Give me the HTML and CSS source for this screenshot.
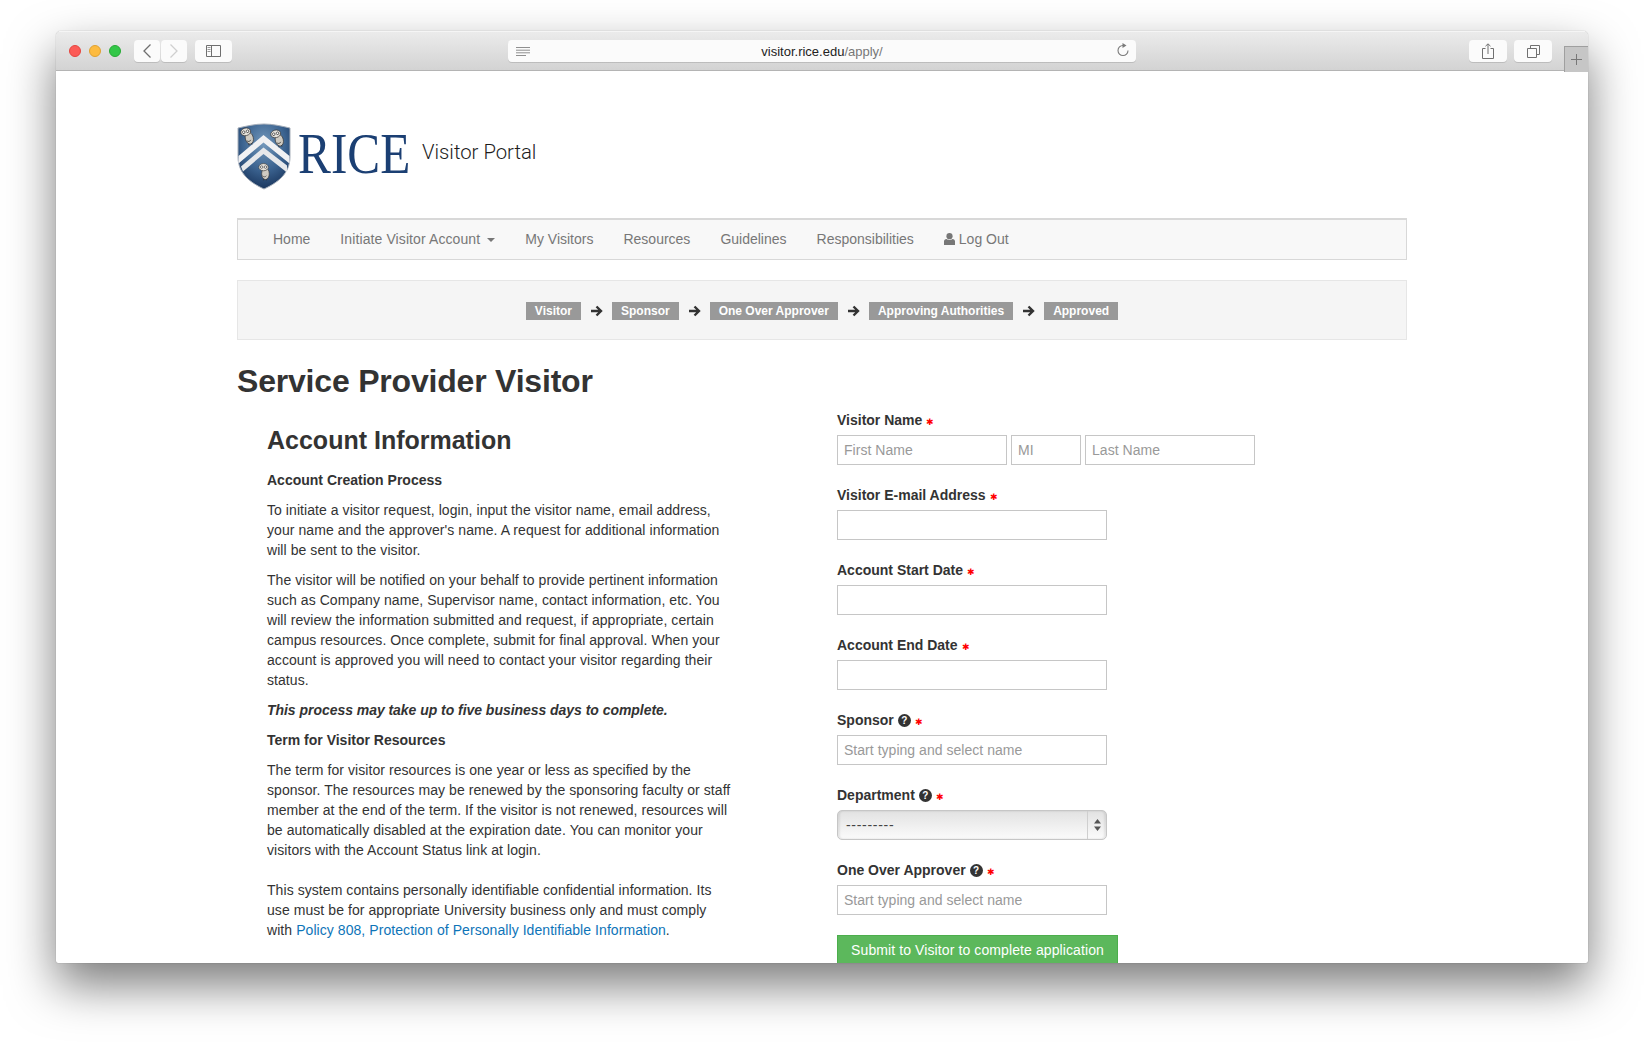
FILE: index.html
```html
<!DOCTYPE html>
<html lang="en">
<head>
<meta charset="utf-8">
<title>Visitor Portal</title>
<link rel="stylesheet" href="styles.css">
</head>
<body>
<div class="window">
  <div class="toolbar">
    <div class="lights">
      <span class="light red"></span><span class="light amber"></span><span class="light green"></span>
    </div>
    <div class="navbtns">
      <span class="tbtn tbtn-nav"><svg width="12" height="16" viewBox="0 0 12 16"><path d="M9.5 1.5 3 8l6.500 6.500" fill="none" stroke="#6f6f6f" stroke-width="1.300"/></svg></span>
      <span class="tbtn tbtn-nav"><svg width="12" height="16" viewBox="0 0 12 16"><path d="M2.500 1.500 9 8l-6.500 6.500" fill="none" stroke="#cfcfcf" stroke-width="1.300"/></svg></span>
    </div>
    <span class="tbtn tbtn-side"><svg width="15" height="12" viewBox="0 0 15 12"><path d="M.5.5h14v11H.500zM5.500.5v11" fill="none" stroke="#6f6f6f"/><path d="M1.500 2.500h3M1.500 4.500h3M1.500 6.500h3" stroke="#9a9a9a"/></svg></span>
    <div class="address">
      <svg class="reader" width="14" height="9" viewBox="0 0 14 9"><path d="M0 .5h14M0 3.200h14M0 5.800h14M0 8.500h10" stroke="#8f8f8f"/></svg>
      <span class="url"><span class="url-host">visitor.rice.edu</span>/apply/</span>
      <svg class="reload" width="13" height="14" viewBox="0 0 13 14"><path d="M7 2.500a5 5 0 1 0 5 5" fill="none" stroke="#7a7a7a" stroke-width="1.100"/><path d="M6.500 0l4 2.500-4 2.500z" fill="#7a7a7a"/></svg>
    </div>
    <span class="tbtn tbtn-share"><svg width="12" height="16" viewBox="0 0 12 16"><path d="M3.500 5.500H.5v10h11v-10h-3M6 11V1M3.500 3.200 6 .8l2.500 2.400" fill="none" stroke="#707070"/></svg></span>
    <span class="tbtn tbtn-tabs"><svg width="13" height="13" viewBox="0 0 13 13"><path d="M.5 3.500h9v9h-9zM3.500 3.500v-3h9v9h-3" fill="none" stroke="#707070"/></svg></span>
    <span class="newtab"><svg width="11" height="11" viewBox="0 0 11 11"><path d="M5.500 0v11M0 5.500h11" stroke="#777"/></svg></span>
  </div>

  <div class="page">
    <header class="brand">
      <div class="logo">
        <svg class="shield" width="54" height="67" viewBox="0 0 54 67">
          <defs>
            <radialGradient id="sh" cx=".5" cy=".3" r=".75">
              <stop offset="0" stop-color="#7398bb"/>
              <stop offset=".55" stop-color="#3b6390"/>
              <stop offset="1" stop-color="#152f56"/>
            </radialGradient>
            <g id="owl">
              <ellipse cx="1" cy="3.500" rx="4" ry="6" fill="#cfcbc2" stroke="#3a3a3a" stroke-width=".7"/>
              <ellipse cx="-1" cy="-3.500" rx="5" ry="3.800" fill="#e4e1da" stroke="#3a3a3a" stroke-width=".7"/>
              <circle cx="-3" cy="-3.600" r="1.300" fill="#fff" stroke="#333" stroke-width=".7"/>
              <circle cx="1" cy="-3.600" r="1.300" fill="#fff" stroke="#333" stroke-width=".7"/>
              <path d="M-1 9v1.500M2 9v1.500M-2 5.500c1 1.500 3 1.500 4 0" stroke="#333" stroke-width=".7" fill="none"/>
            </g>
          </defs>
          <path d="M1 5C10 3 18 1 27 1s17 2 26 4v29c0 17-13 26-26 32C14 60 1 51 1 34z" fill="url(#sh)" stroke="#a7afba"/>
          <path d="M1.500 33 26.500 12 52.500 33v7.500L26.500 19.500 1.500 40.500z" fill="#f0f1f3"/>
          <path d="M4 43.500 26.500 24.500 50 42.500v7L26.500 31 6 48.500z" fill="#e6e8eb"/>
          <use href="#owl" transform="translate(10.500 12) rotate(-14)"/>
          <use href="#owl" transform="translate(40.500 14) rotate(-14)"/>
          <use href="#owl" transform="translate(27.500 47.500) scale(.95)"/>
        </svg>
        <span class="rice">RICE</span>
      </div>
      <span class="portal">Visitor Portal</span>
    </header>

    <nav class="navbar">
      <a class="navlink">Home</a>
      <a class="navlink navlink-wide">Initiate Visitor Account<span class="caret"></span></a>
      <a class="navlink">My Visitors</a>
      <a class="navlink">Resources</a>
      <a class="navlink">Guidelines</a>
      <a class="navlink">Responsibilities</a>
      <a class="navlink"><svg class="usericon" width="11" height="12" viewBox="0 0 11 12"><circle cx="5.500" cy="3.200" r="3.100" fill="#777"/><path d="M0 12V8.500C0 7 1 6 2.500 6c.8.700 1.800 1 3 1s2.200-.3 3-1C10 6 11 7 11 8.500V12z" fill="#777"/></svg>Log Out</a>
    </nav>

    <div class="steps">
      <span class="step">Visitor</span>
      <svg class="arrow" width="13" height="12" viewBox="0 0 13 12"><path d="M1 6h9M6.500 1.500 11 6l-4.500 4.500" fill="none" stroke="#333" stroke-width="2.400"/></svg>
      <span class="step">Sponsor</span>
      <svg class="arrow" width="13" height="12" viewBox="0 0 13 12"><path d="M1 6h9M6.500 1.500 11 6l-4.500 4.500" fill="none" stroke="#333" stroke-width="2.400"/></svg>
      <span class="step">One Over Approver</span>
      <svg class="arrow" width="13" height="12" viewBox="0 0 13 12"><path d="M1 6h9M6.500 1.500 11 6l-4.500 4.500" fill="none" stroke="#333" stroke-width="2.400"/></svg>
      <span class="step">Approving Authorities</span>
      <svg class="arrow" width="13" height="12" viewBox="0 0 13 12"><path d="M1 6h9M6.500 1.500 11 6l-4.500 4.500" fill="none" stroke="#333" stroke-width="2.400"/></svg>
      <span class="step">Approved</span>
    </div>

    <h1 class="title">Service Provider Visitor</h1>

    <div class="columns">
      <section class="info">
        <h2 class="info-title">Account Information</h2>
        <p class="strong">Account Creation Process</p>
        <p>To initiate a visitor request, login, input the visitor name, email address,<br>your name and the approver's name. A request for additional information<br>will be sent to the visitor.</p>
        <p>The visitor will be notified on your behalf to provide pertinent information<br>such as Company name, Supervisor name, contact information, etc. You<br>will review the information submitted and request, if appropriate, certain<br>campus resources. Once complete, submit for final approval. When your<br>account is approved you will need to contact your visitor regarding their<br>status.</p>
        <p class="strong em">This process may take up to five business days to complete.</p>
        <p class="strong">Term for Visitor Resources</p>
        <p class="spaced">The term for visitor resources is one year or less as specified by the<br>sponsor. The resources may be renewed by the sponsoring faculty or staff<br>member at the end of the term. If the visitor is not renewed, resources will<br>be automatically disabled at the expiration date. You can monitor your<br>visitors with the Account Status link at login.</p>
        <p>This system contains personally identifiable confidential information. Its<br>use must be for appropriate University business only and must comply<br>with <a class="link">Policy 808, Protection of Personally Identifiable Information</a>.</p>
      </section>

      <form class="form">
        <div class="group">
          <label class="label">Visitor Name<span class="req">✱</span></label>
          <div class="namerow">
            <input class="input w-name" placeholder="First Name">
            <input class="input w-mi" placeholder="MI">
            <input class="input w-name" placeholder="Last Name">
          </div>
        </div>
        <div class="group">
          <label class="label">Visitor E-mail Address<span class="req">✱</span></label>
          <input class="input w-full">
        </div>
        <div class="group">
          <label class="label">Account Start Date<span class="req">✱</span></label>
          <input class="input w-full">
        </div>
        <div class="group">
          <label class="label">Account End Date<span class="req">✱</span></label>
          <input class="input w-full">
        </div>
        <div class="group">
          <label class="label">Sponsor<span class="help">?</span><span class="req">✱</span></label>
          <input class="input w-full" placeholder="Start typing and select name">
        </div>
        <div class="group">
          <label class="label">Department<span class="help">?</span><span class="req">✱</span></label>
          <div class="select">
            <span class="select-value">---------</span>
            <span class="select-arrows"><svg width="7" height="12" viewBox="0 0 7 12"><path d="M3.500 0 7 4.500H0zM3.500 12 0 7.500h7z" fill="#555"/></svg></span>
          </div>
        </div>
        <div class="group">
          <label class="label">One Over Approver<span class="help">?</span><span class="req">✱</span></label>
          <input class="input w-full" placeholder="Start typing and select name">
        </div>
        <button type="button" class="submit">Submit to Visitor to complete application</button>
      </form>
    </div>
  </div>
</div>
</body>
</html>
```

FILE: styles.css
```css
* { box-sizing: border-box; }
html, body { margin: 0; height: 100%; overflow: hidden; background: #fff; }
body {
  padding: 31px 56px 0;
  font-family: "Liberation Sans", Arial, sans-serif;
  font-size: 14px;
  line-height: 20px;
  color: #333;
}
.window {
  width: 1532px;
  height: 932px;
  background: #fff;
  border-radius: 5px 5px 2px 2px;
  box-shadow: 0 22px 48px rgba(0, 0, 0, .52), 0 0 1px rgba(0, 0, 0, .45);
  overflow: hidden;
  display: flex;
  flex-direction: column;
}

/* Browser chrome */
.toolbar {
  flex: none;
  height: 40px;
  display: flex;
  align-items: flex-start;
  padding-top: 8px;
  background: linear-gradient(#ebebeb, #d3d3d3);
  border-bottom: 1px solid #b4b4b4;
  border-top: 1px solid #f5f5f5;
}
.lights { display: flex; gap: 8px; margin: 5px 0 0 13px; }
.light { width: 12px; height: 12px; border-radius: 50%; }
.red { background: #fc5b57; border: 1px solid #e5453f; }
.amber { background: #fdbb40; border: 1px solid #e0a130; }
.green { background: #33c748; border: 1px solid #27aa35; }
.navbtns { display: flex; gap: 1px; margin-left: 13px; }
.tbtn {
  flex: none;
  display: flex;
  align-items: center;
  justify-content: center;
  height: 22px;
  background: #fbfbfb;
  border-radius: 4px;
  box-shadow: 0 1px 0 rgba(0, 0, 0, .12);
}
.tbtn-nav { width: 26px; }
.tbtn-side { width: 37px; margin-left: 8px; }
.tbtn-share { width: 38px; margin-left: 333px; }
.tbtn-tabs { width: 38px; margin-left: 7px; }
.address {
  flex: none;
  position: relative;
  width: 628px;
  height: 22px;
  margin-left: 276px;
  background: #fbfbfb;
  border-radius: 4px;
  box-shadow: 0 1px 0 rgba(0, 0, 0, .12);
  display: flex;
  align-items: center;
  justify-content: center;
  font-size: 13px;
  color: #777;
}
.url { margin-top: 1px; }
.url-host { color: #222; }
.reader { position: absolute; left: 8px; top: 7px; }
.reload { position: absolute; right: 7px; top: 3px; }
.newtab {
  flex: none;
  width: 24px;
  height: 26px;
  margin: 6px 0 0 12px;
  background: #c6c6c6;
  border: 1px solid #9f9f9f;
  border-width: 1px 0 0 1px;
  display: flex;
  align-items: center;
  justify-content: center;
}

/* Page */
.page { flex: 1; width: 1351px; margin-left: 181px; }
.brand { height: 147px; display: flex; align-items: center; padding-top: 22px; }
.logo { display: flex; align-items: center; width: 185px; }
.shield { flex: none; margin-top: 2px; }
.rice {
  display: inline-block;
  font-family: "Liberation Serif", "Times New Roman", serif;
  font-size: 58px;
  line-height: 66px;
  color: #1b3f73;
  margin: -3px 0 0 7px;
  transform: scaleX(.85);
  transform-origin: left center;
  white-space: nowrap;
}
.portal {
  font-family: Roboto, "Liberation Sans", sans-serif;
  font-weight: 300;
  font-size: 20.300px;
  line-height: 26px;
  color: #1c1c1c;
  margin-top: -7px;
}

.navbar {
  width: 1170px;
  height: 42px;
  display: flex;
  align-items: center;
  padding: 0 0 2px 20px;
  background: #f8f8f8;
  border: 1px solid #d8d8d8;
  border-top-width: 2px;
}
.navlink { padding: 0 15px; color: #777; white-space: nowrap; }
.navlink-wide { letter-spacing: .1px; }
.caret {
  display: inline-block;
  margin-left: 7px;
  border-top: 4px solid #777;
  border-left: 4px solid transparent;
  border-right: 4px solid transparent;
  vertical-align: middle;
}
.usericon { margin-right: 4px; vertical-align: -1px; }

.steps {
  width: 1170px;
  height: 60px;
  margin-top: 20px;
  padding-top: 2px;
  display: flex;
  align-items: center;
  justify-content: center;
  gap: 5px;
  background: #f5f5f5;
  border: 1px solid #e6e6e6;
}
.step {
  height: 18px;
  padding: 0 9px;
  background: #999;
  color: #fff;
  font-size: 12px;
  font-weight: bold;
  line-height: 18px;
}
.arrow { flex: none; margin: 0 4px; }

.title { margin: 23px 0 11px; font-size: 32px; line-height: 36px; font-weight: bold; letter-spacing: -.2px; color: #333; }
.columns { display: flex; }
.info { width: 600px; padding: 16px 0 0 30px; }
.info p { margin: 0 0 10px; letter-spacing: .065px; }
.info-title { margin: 0 0 16px; font-size: 25px; line-height: 28px; font-weight: bold; color: #333; }
.info .strong { font-weight: bold; letter-spacing: 0; }
.info .em { font-style: italic; letter-spacing: -.04px; }
.info .spaced { margin-bottom: 20px; }
.link { color: #0e74b8; }

.form { width: 420px; }
.group { margin-bottom: 20px; }
.label { display: block; height: 20px; margin-bottom: 5px; font-weight: bold; white-space: nowrap; }
.req { margin-left: 4px; color: #f00; font-size: 9px; font-weight: normal; }
.help {
  display: inline-block;
  width: 13px;
  height: 13px;
  margin-left: 4px;
  border-radius: 50%;
  background: #333;
  color: #fff;
  font-size: 10px;
  line-height: 13px;
  text-align: center;
  vertical-align: 0;
  position: relative;
  top: -1px;
}
.namerow { display: flex; gap: 4px; }
.input {
  height: 30px;
  padding: 0 6px;
  border: 1px solid #c6c6c6;
  border-radius: 0;
  background: #fff;
  font: 14px "Liberation Sans", Arial, sans-serif;
  letter-spacing: .03px;
  color: #333;
  display: block;
  outline: none;
}
.input::placeholder { color: #999; opacity: 1; }
.w-name { width: 170px; }
.w-mi { width: 70px; }
.w-full { width: 270px; }
.select {
  width: 270px;
  height: 30px;
  display: flex;
  align-items: center;
  border: 1px solid #c6c6c6;
  border-radius: 5px;
  background: linear-gradient(#e2e2e2, #fbfbfb);
  box-shadow: inset 2px 0 2px rgba(0, 0, 0, .08), inset -2px 0 2px rgba(0, 0, 0, .08);
  font-size: 14px;
  letter-spacing: .7px;
  color: #444;
}
.select-value { flex: 1; padding-left: 8px; }
.select-arrows {
  flex: none;
  width: 19px;
  height: 100%;
  display: flex;
  align-items: center;
  justify-content: center;
  border-left: 1px solid #cfcfcf;
}
.submit {
  display: block;
  height: 30px;
  width: 281px;
  padding: 0;
  background: #5cb85c;
  border: 1px solid #4cae4c;
  color: #fff;
  font: 14px "Liberation Sans", Arial, sans-serif;
  letter-spacing: .1px;
  text-align: center;
}
```
